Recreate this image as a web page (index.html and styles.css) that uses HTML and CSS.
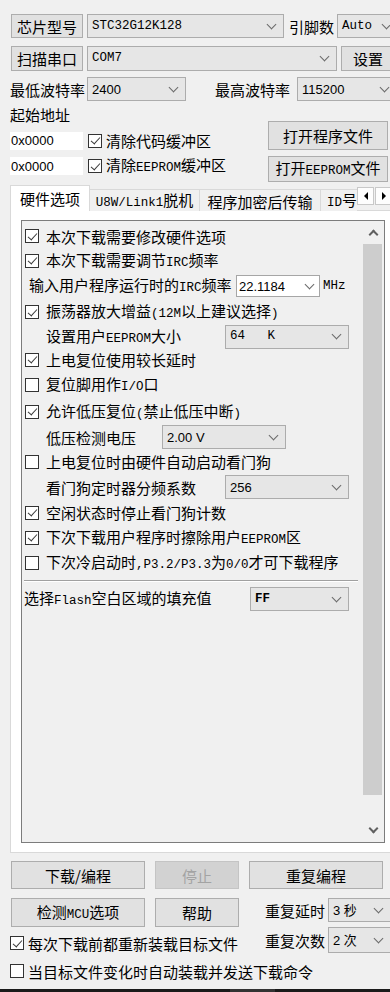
FILE: index.html
```html
<!DOCTYPE html>
<html lang="zh-CN">
<head>
<meta charset="utf-8">
<title>STC-ISP</title>
<link rel="stylesheet" href="styles.css">
</head>
<body>
<div class="win">
  <div class="row r1">
    <div class="btn b-side">芯片型号</div>
    <div class="combo c-chip"><span class="m">STC32G12K128</span><i class="chev"></i></div>
    <span class="l-pins">引脚数</span>
    <div class="combo c-auto"><span class="m">Auto</span><i class="chev"></i></div>
  </div>
  <div class="row r2">
    <div class="btn b-side">扫描串口</div>
    <div class="combo c-com"><span class="m">COM7</span><i class="chev"></i></div>
    <div class="btn b-set">设置</div>
  </div>
  <div class="row r3">
    <span class="l-baud">最低波特率</span>
    <div class="combo c-baud"><span class="s">2400</span><i class="chev"></i></div>
    <span class="l-baud l-baud2">最高波特率</span>
    <div class="combo c-baud2"><span class="s">115200</span><i class="chev"></i></div>
  </div>
  <div class="addr">
    <div class="addr-left">
      <div class="l-addr">起始地址</div>
      <div class="addr-line">
        <div class="inp">0x0000</div>
        <div class="chk"><i class="cb on"></i><span>清除代码缓冲区</span></div>
      </div>
    </div>
    <div class="btn b-open">打开程序文件</div>
  </div>
  <div class="addr addr2">
    <div class="addr-line line2">
      <div class="inp">0x0000</div>
      <div class="chk"><i class="cb on"></i><span>清除<span class="n">EEPROM</span>缓冲区</span></div>
    </div>
    <div class="btn b-open b-open2"><span>打开<span class="n">EEPROM</span>文件</span></div>
  </div>

  <div class="tabbar">
    <div class="tablist">
      <div class="tab active">硬件选项</div>
      <div class="tab t2"><span><span class="n">U8W/Link1</span>脱机</span></div>
      <div class="tab t3">程序加密后传输</div>
      <div class="tab t4"><span><span class="n">ID</span>号</span></div>
    </div>
    <div class="tabarrows">
      <div class="tarr"><i class="tri-l"></i></div>
      <div class="tarr"><i class="tri-r"></i></div>
    </div>
  </div>

  <div class="panel">
    <div class="box">
      <div class="list">
        <div class="it h24"><i class="cb on"></i><span>本次下载需要修改硬件选项</span></div>
        <div class="it h25"><i class="cb on"></i><span>本次下载需要调节<span class="n">IRC</span>频率</span></div>
        <div class="it h26 sub0"><span class="lab w207">输入用户程序运行时的<span class="n">IRC</span>频率</span><div class="combo ed c-irc"><span class="s">22.1184</span><i class="chev"></i></div><span class="n mhz">MHz</span></div>
        <div class="it h26"><i class="cb on"></i><span>振荡器放大增益<span class="n">(12M</span>以上建议选择<span class="n">)</span></span></div>
        <div class="it h23 sub"><span class="lab w179">设置用户<span class="n">EEPROM</span>大小</span><div class="combo c-124"><span class="m pre">64   K</span><i class="chev"></i></div></div>
        <div class="it h23"><i class="cb on"></i><span>上电复位使用较长延时</span></div>
        <div class="it h27"><i class="cb"></i><span>复位脚用作<span class="n">I/O</span>口</span></div>
        <div class="it h27"><i class="cb on"></i><span>允许低压复位<span class="n">(</span>禁止低压中断<span class="n">)</span></span></div>
        <div class="it h24 sub"><span class="lab w116">低压检测电压</span><div class="combo c-124"><span class="s">2.00 V</span><i class="chev"></i></div></div>
        <div class="it h25"><i class="cb"></i><span>上电复位时由硬件自动启动看门狗</span></div>
        <div class="it h26 sub"><span class="lab w179">看门狗定时器分频系数</span><div class="combo c-124"><span class="s">256</span><i class="chev"></i></div></div>
        <div class="it h25"><i class="cb on"></i><span>空闲状态时停止看门狗计数</span></div>
        <div class="it h25"><i class="cb on"></i><span>下次下载用户程序时擦除用户<span class="n">EEPROM</span>区</span></div>
        <div class="it h25"><i class="cb"></i><span>下次冷启动时<span class="n">,P3.2/P3.3</span>为<span class="n">0/0</span>才可下载程序</span></div>
        <div class="sep"></div>
        <div class="it h24 flash"><span class="lab w226">选择<span class="n">Flash</span>空白区域的填充值</span><div class="combo c-ff"><span class="m b">FF</span><i class="chev"></i></div></div>
      </div>
      <div class="sbar">
        <div class="sb-btn"><i class="up"></i></div>
        <div class="thumb"></div>
        <div class="track"></div>
        <div class="sb-btn"><i class="down"></i></div>
      </div>
    </div>
  </div>

  <div class="brow1">
    <div class="btn bw1">下载/编程</div>
    <div class="btn bw2 dis">停止</div>
    <div class="btn bw1">重复编程</div>
  </div>
  <div class="bwrap">
    <div class="bleft">
      <div class="brow2">
        <div class="btn bw1"><span>检测<span class="n">MCU</span>选项</span></div>
        <div class="btn bw2">帮助</div>
      </div>
      <div class="chk crow"><i class="cb on"></i><span>每次下载前都重新装载目标文件</span></div>
    </div>
    <div class="bright">
      <div class="rrow"><span class="rl">重复延时</span><div class="combo c-rep"><span class="s">3 秒</span><i class="chev"></i></div></div>
      <div class="rrow rr2"><span class="rl">重复次数</span><div class="combo c-rep c-rep2"><span class="s">2 次</span><i class="chev"></i></div></div>
    </div>
  </div>
  <div class="chk crow crow2"><i class="cb"></i><span>当目标文件变化时自动装载并发送下载命令</span></div>
</div>
<div class="strip"><div class="strip-seg"></div></div>
</body>
</html>
```

FILE: styles.css
```css
* { box-sizing: border-box; }
html, body { margin: 0; padding: 0; overflow: hidden; background: #f0f0f0; }
body {
  width: 390px;
  height: 992px;
  font-family: "Noto Sans CJK SC", "Liberation Sans", sans-serif;
  font-size: 15px;
  line-height: 1;
  color: #000;
}
.win { width: 400px; height: 989px; padding-top: 14px; }

.m { font-family: "Liberation Mono", "Noto Sans CJK SC", monospace; font-size: 12.5px; }
.m.b { font-weight: bold; }
.pre { white-space: pre; }
.s { font-family: "Liberation Sans", "Noto Sans CJK SC", sans-serif; font-size: 13px; white-space: pre; }
.n { font-family: "Liberation Mono", monospace; font-size: 12.5px; }

.row { display: flex; align-items: center; }

.btn {
  display: flex; align-items: center; justify-content: center;
  background: #e1e1e1; border: 1px solid #adadad; flex: none;
}
.btn.dis { background: #d2d2d2; border-color: #c4c4c4; color: #a3a3a3; }

.combo {
  display: flex; align-items: center; justify-content: space-between;
  background: #e6e6e6; border: 1px solid #acacac; height: 24px;
  padding: 0 8px 0 4px; flex: none;
}
.combo.ed { background: #fff; border-color: #a6a6a6; padding-left: 2px; height: 22px; }
.chev {
  width: 7px; height: 7px; border: solid #6a6a6a; border-width: 0 1px 1px 0;
  transform: rotate(45deg); margin-top: -4px; flex: none;
}

.r1 { height: 24px; margin-left: 11px; }
.b-side { width: 72px; height: 24px; }
.c-chip { width: 197px; margin-left: 4px; }
.l-pins { margin-left: 5px; width: 45px; }
.c-auto { width: 62px; margin-left: 3px; }

.r2 { height: 25px; margin-left: 11px; margin-top: 8px; }
.r2 .b-side { height: 25px; }
.c-com { width: 250px; height: 25px; margin-left: 4px; }
.b-set { width: 54px; height: 25px; margin-left: 4px; }

.r3 { height: 24px; margin-left: 10px; margin-top: 6px; }
.l-baud { width: 75px; }
.c-baud { width: 99px; margin-left: 2px; }
.l-baud2 { margin-left: 29px; }
.c-baud2 { width: 100px; margin-left: 7px; }

.addr { display: flex; align-items: flex-end; margin-left: 10px; }
.addr-left { width: 258px; }
.l-addr { height: 27px; display: flex; align-items: center; }
.addr-line { display: flex; align-items: center; height: 19px; margin-top: 3px; }
.inp {
  width: 73px; height: 18px; background: #fff; padding-left: 1px;
  display: flex; align-items: center;
  font-family: "Liberation Sans", sans-serif; font-size: 13px;
}
.chk { display: flex; align-items: center; }
.addr-line .chk { margin-left: 5px; }
.addr-line .cb { margin-right: 4px; }
.b-open { width: 120px; height: 29px; }
.addr2 { margin-top: 6px; align-items: flex-start; }
.line2 { width: 258px; margin-top: 1px; height: 18px; }
.b-open2 { height: 26px; }

.cb {
  display: inline-block; width: 14px; height: 14px; border: 1px solid #333;
  background: #fff; position: relative; flex: none;
}
.cb.on::after {
  content: ""; position: absolute; left: 3.5px; top: 0.5px; width: 4px; height: 8px;
  border: solid #3a3a3a; border-width: 0 1.4px 1.4px 0; transform: rotate(42deg);
}

.tabbar { display: flex; margin-top: 3px; margin-left: 10px; height: 25px; position: relative; z-index: 1; }
.tablist { display: flex; align-items: flex-end; width: 347px; overflow: hidden; height: 26px; }
.tab {
  height: 22px; border: 1px solid #d9d9d9; border-bottom: none; background: #f0f0f0;
  display: flex; align-items: center; justify-content: center; flex: none; margin-left: -1px;
  padding-top: 1px; white-space: nowrap;
}
.tab.active { height: 26px; width: 80px; margin-left: 0; background: #fff; border-color: #d9d9d9; padding-top: 0; }
.t2 { width: 111px; }
.t3 { width: 122px; }
.t4 { width: 60px; justify-content: flex-start; padding-left: 6px; }
.tabarrows { display: flex; gap: 1px; margin-top: 2px; }
.tarr {
  width: 17px; height: 18px; background: #fdfdfd; border: 1px solid #c8c8c8;
  display: flex; align-items: center; justify-content: center;
}
.tri-l { width: 0; height: 0; border-top: 4px solid transparent; border-bottom: 4px solid transparent; border-right: 4px solid #000; }
.tri-r { width: 0; height: 0; border-top: 4px solid transparent; border-bottom: 4px solid transparent; border-left: 4px solid #000; }

.panel {
  margin-left: 10px; width: 386px; height: 643px; background: #fff;
  border: 1px solid #d9d9d9; padding: 9px 10px; margin-top: 0;
}
.box { display: flex; width: 364px; height: 623px; border: 1px solid #7c7c7c; background: #f0f0f0; }
.list { width: 340px; padding: 3px 0 0 3px; }
.it { display: flex; align-items: center; white-space: nowrap; }
.it .cb { margin-right: 7px; }
.h23 { height: 23px; } .h24 { height: 24px; } .h25 { height: 25px; }
.h26 { height: 26px; } .h27 { height: 27px; }
.sub0 { padding-left: 4px; }
.sub { padding-left: 21px; }
.lab { flex: none; }
.w207 { width: 207px; } .w179 { width: 179px; } .w116 { width: 116px; } .w226 { width: 226px; }
.c-irc { width: 84px; padding-right: 6px; }
.mhz { margin-left: 3px; }
.c-124 { width: 124px; }
.sep { margin: 5px 0 0 -1px; width: 334px; border-top: 1px solid #a0a0a0; border-bottom: 1px solid #fff; }
.flash { margin-top: 5px; margin-left: -1px; }
.c-ff { width: 99px; }

.sbar { width: 22px; display: flex; flex-direction: column; }
.sb-btn { height: 23px; display: flex; align-items: center; justify-content: center; }
.thumb { height: 551px; margin: 0 2px 0 1px; background: #cdcdcd; }
.track { flex: 1; }
.up { width: 7px; height: 7px; border: solid #606060; border-width: 2px 0 0 2px; transform: rotate(45deg); margin-top: 4px; }
.down { width: 7px; height: 7px; border: solid #606060; border-width: 0 2px 2px 0; transform: rotate(45deg); margin-top: -4px; }

.brow1 { display: flex; gap: 10px; margin: 8px 0 0 11px; }
.bw1 { width: 134px; height: 28px; }
.bw2 { width: 84px; height: 28px; }
.bwrap { display: flex; margin: 9px 0 0 10px; }
.bleft { width: 255px; }
.brow2 { display: flex; gap: 10px; margin-left: 1px; }
.brow2 .btn { height: 29px; }
.crow { margin-top: 6px; height: 20px; white-space: nowrap; }
.crow .cb { margin-right: 4px; }
.crow2 { margin: 8px 0 0 10px; }
.bright { display: flex; flex-direction: column; gap: 5px; }
.rrow { display: flex; align-items: center; }
.rl { width: 63px; }
.c-rep { width: 63px; height: 24px; }
.c-rep2 { height: 26px; }

.strip { height: 3px; background: #1a1a1a; display: flex; }
.strip-seg { margin-left: 230px; width: 45px; background: #333; }
```
